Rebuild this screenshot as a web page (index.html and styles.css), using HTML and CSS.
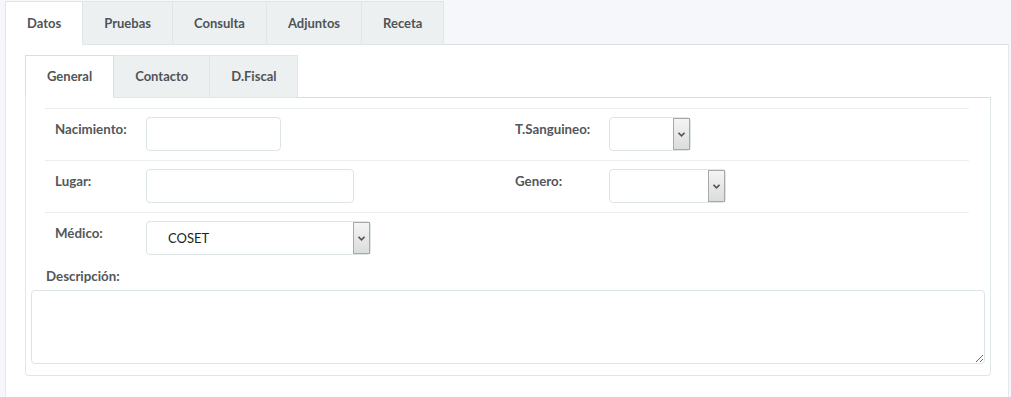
FILE: index.html
```html
<!DOCTYPE html>
<html lang="es">
<head>
    <meta charset="UTF-8">
    <meta name="viewport" content="width=device-width, initial-scale=1.0">
    <title>Paciente</title>
    <link rel="stylesheet" href="styles.css">
</head>
<body>
    <div class="wrap">
        <ul class="tabs">
            <li class="tab active">Datos</li>
            <li class="tab">Pruebas</li>
            <li class="tab">Consulta</li>
            <li class="tab">Adjuntos</li>
            <li class="tab">Receta</li>
        </ul>
        <div class="panel">
            <ul class="tabs sub">
                <li class="tab active">General</li>
                <li class="tab">Contacto</li>
                <li class="tab">D.Fiscal</li>
            </ul>
            <div class="box">
                <div class="row">
                    <label class="lbl">Nacimiento:</label>
                    <div><input class="input w-nac" type="text"></div>
                    <label class="lbl">T.Sanguineo:</label>
                    <div>
                        <div class="select w-sangre">
                            <span class="value"></span>
                            <span class="arrow"><svg width="7" height="5" viewBox="0 0 7 5"><path d="M0.5 0.8 L3.5 3.8 L6.5 0.8" fill="none" stroke="#555" stroke-width="1.6"/></svg></span>
                        </div>
                    </div>
                </div>
                <div class="row">
                    <label class="lbl">Lugar:</label>
                    <div><input class="input w-lugar" type="text"></div>
                    <label class="lbl">Genero:</label>
                    <div>
                        <div class="select w-genero">
                            <span class="value"></span>
                            <span class="arrow"><svg width="7" height="5" viewBox="0 0 7 5"><path d="M0.5 0.8 L3.5 3.8 L6.5 0.8" fill="none" stroke="#555" stroke-width="1.6"/></svg></span>
                        </div>
                    </div>
                </div>
                <div class="row last">
                    <label class="lbl">Médico:</label>
                    <div>
                        <div class="select w-medico">
                            <span class="value">COSET</span>
                            <span class="arrow"><svg width="7" height="5" viewBox="0 0 7 5"><path d="M0.5 0.8 L3.5 3.8 L6.5 0.8" fill="none" stroke="#555" stroke-width="1.6"/></svg></span>
                        </div>
                    </div>
                </div>
                <label class="lbl desc">Descripción:</label>
                <textarea class="area"></textarea>
            </div>
        </div>
    </div>
</body>
</html>
```
FILE: styles.css
```css
body {
    margin: 0;
    font-family: Lato, "Open Sans", sans-serif;
    font-size: 13px;
    color: #4f5458;
    background-color: #f6f7fa;
}
.wrap {
    margin-left: 5px;
    width: 1004px;
}
.tabs {
    display: flex;
    list-style: none;
    margin: 0;
    padding: 1px 0 0 0;
    border-bottom: 1px solid #dcdfe1;
}
.tab {
    height: 42px;
    line-height: 42px;
    padding: 0 21px;
    font-weight: bold;
    background: #ecf0f1;
    border: 1px solid #dfe6e8;
    border-left: none;
    margin-bottom: -1px;
}
.tab.active {
    background: white;
    border-left: 1px solid #dfe6e8;
    border-bottom-color: white;
}
.panel {
    background: white;
    border-left: 1px solid #e3e9ec;
    border-right: 1px solid #e3e9ec;
    padding: 10px 17px 30px 19px;
}
.tabs.sub {
    padding-top: 0;
    border-bottom-color: #dddddd;
}
.tabs.sub .tab {
    height: 41px;
    line-height: 41px;
    padding: 0 21px;
}
.tabs.sub .tab.active {
    border-color: #dddddd;
    border-bottom-color: white;
}
.box {
    border: 1px solid #dfe6e8;
    border-top: none;
    border-radius: 0 0 4px 4px;
    padding: 10px 5px 11px 5px;
}
.row {
    display: grid;
    grid-template-columns: 101px 359px 104px 1fr;
    margin: 0 16px 0 14px;
    padding: 8px 0 9px 0;
    border-top: 1px solid #e9eef0;
}
.row.last {
    padding-bottom: 8px;
}
.lbl {
    padding: 4px 0 0 10px;
    font-weight: bold;
    font-size: 13.3px;
    color: #52575b;
}
.input {
    box-sizing: border-box;
    height: 34px;
    border: 1px solid #dde4e6;
    border-radius: 4px;
    padding: 0 10px;
    font-family: inherit;
}
.w-nac { width: 135px; }
.w-lugar { width: 208px; }
.select {
    box-sizing: border-box;
    display: flex;
    height: 34px;
    border: 1px solid #dde4e6;
    border-radius: 4px;
    background: white;
}
.w-medico { width: 225px; }
.w-sangre { width: 82px; }
.w-genero { width: 117px; }
.select .value {
    flex: 1;
    padding-left: 21px;
    line-height: 33px;
    font-size: 13px;
    color: #222;
}
.select .arrow {
    box-sizing: border-box;
    width: 17px;
    border: 1px solid #a9a9a9;
    background: linear-gradient(#f4f4f4, #dcdcdc);
    display: flex;
    align-items: center;
    justify-content: center;
}
.lbl.desc {
    display: block;
    padding: 5px 0 0 15px;
    height: 22px;
}
.area {
    display: block;
    box-sizing: border-box;
    width: 100%;
    height: 74px;
    border: 1px solid #dde4e6;
    border-radius: 4px;
    font-family: inherit;
}
```
